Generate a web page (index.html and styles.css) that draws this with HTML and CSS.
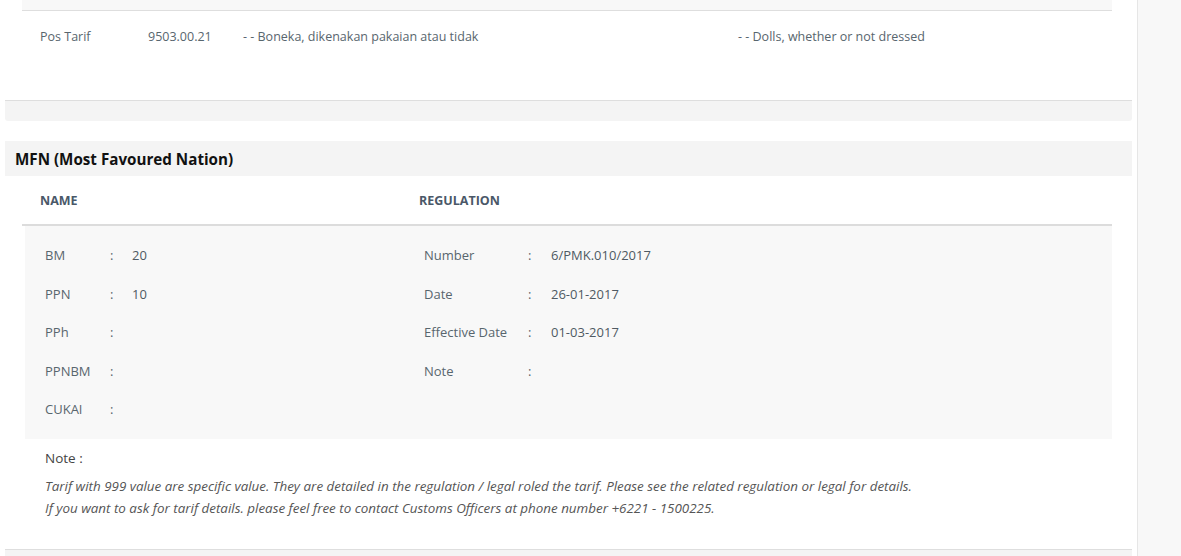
FILE: index.html
```html
<!DOCTYPE html>
<html lang="en">
<head>
  <meta charset="UTF-8">
  <meta name="viewport" content="width=device-width, initial-scale=1.0">
  <title>Tarif Detail</title>
  <link rel="stylesheet" href="styles.css">
</head>
<body>
  <div class="layout">
    <main class="content">

      <!-- tariff position panel -->
      <section class="panel">
        <div class="panel-body">
          <div class="top-strip"></div>
          <div class="tarif-row">
            <span class="tarif-label">Pos Tarif</span>
            <span class="tarif-code">9503.00.21</span>
            <span class="tarif-desc">- - Boneka, dikenakan pakaian atau tidak</span>
            <span class="tarif-desc">- - Dolls, whether or not dressed</span>
          </div>
        </div>
        <div class="panel-footer"></div>
      </section>

      <!-- MFN panel -->
      <section class="panel mfn">
        <h2 class="panel-heading">MFN (Most Favoured Nation)</h2>
        <div class="table">
          <div class="table-head">
            <div class="th">NAME</div>
            <div class="th">REGULATION</div>
          </div>
          <div class="table-body">
            <div class="col">
              <div class="field"><span class="key">BM</span><span class="sep">:</span><span class="val">20</span></div>
              <div class="field"><span class="key">PPN</span><span class="sep">:</span><span class="val">10</span></div>
              <div class="field"><span class="key">PPh</span><span class="sep">:</span><span class="val"></span></div>
              <div class="field"><span class="key">PPNBM</span><span class="sep">:</span><span class="val"></span></div>
              <div class="field"><span class="key">CUKAI</span><span class="sep">:</span><span class="val"></span></div>
            </div>
            <div class="col col-reg">
              <div class="field"><span class="key">Number</span><span class="sep">:</span><span class="val">6/PMK.010/2017</span></div>
              <div class="field"><span class="key">Date</span><span class="sep">:</span><span class="val">26-01-2017</span></div>
              <div class="field"><span class="key">Effective Date</span><span class="sep">:</span><span class="val">01-03-2017</span></div>
              <div class="field"><span class="key">Note</span><span class="sep">:</span><span class="val"></span></div>
            </div>
          </div>
        </div>
        <div class="note">
          <p class="note-title">Note :</p>
          <p class="note-text">Tarif with 999 value are specific value. They are detailed in the regulation / legal roled the tarif. Please see the related regulation or legal for details.</p>
          <p class="note-text">If you want to ask for tarif details. please feel free to contact Customs Officers at phone number +6221 - 1500225.</p>
        </div>
        <div class="panel-footer"></div>
      </section>

    </main>
    <aside class="side"></aside>
  </div>
</body>
</html>
```

FILE: styles.css
```css
html, body {
  margin: 0;
  height: 100%;
}
body {
  font-family: "Open Sans", "Noto Sans", sans-serif;
  font-size: 12.5px;
  color: #58666e;
  background: #fff;
  overflow: hidden;
}
.layout {
  display: flex;
  height: 556px;
}
.content {
  width: 1138px;
  padding: 0 5px;
  box-sizing: border-box;
  border-right: 1px solid #e6e6e6;
}
.side {
  flex: 1;
  background: #f8f8f8;
}
.panel-body {
  padding: 0 20px 0 17px;
}
.top-strip {
  height: 10px;
  background: #f8f8f8;
  border-bottom: 1px solid #dedede;
}
.tarif-row {
  display: grid;
  grid-template-columns: 108px 95px 495px 1fr;
  padding: 18px 0 0 18px;
  height: 71px;
  line-height: 16px;
}
.panel-footer {
  height: 20px;
  background: #f4f4f4;
  border-top: 1px solid #dedede;
  border-radius: 0 0 3px 3px;
}
.mfn {
  margin-top: 20px;
}
.panel-heading {
  margin: 0;
  height: 35px;
  line-height: 36px;
  padding-left: 10px;
  background: #f4f4f4;
  font-size: 15.2px;
  font-weight: 700;
  color: #111;
}
.table {
  margin: 0 20px 0 17px;
}
.table-head {
  display: grid;
  grid-template-columns: 379px 1fr;
  height: 48px;
  border-bottom: 2px solid #dcdcdc;
}
.th {
  padding-left: 18px;
  line-height: 50px;
  font-size: 12.5px;
  font-weight: 700;
  color: #4a5868;
}
.table-body {
  display: grid;
  grid-template-columns: 379px 1fr;
  margin-left: 3px;
  padding: 11px 0 9px;
  background: #f8f8f8;
}
.col {
  padding-left: 20px;
}
.field {
  display: grid;
  grid-template-columns: 65px 22px 1fr;
  height: 38.5px;
  line-height: 37px;
  font-size: 13px;
}
.col-reg .field {
  grid-template-columns: 104px 23px 1fr;
}
.val {
  color: #4f5a63;
}
.note {
  padding: 10px 0 30px 40px;
}
.note-title {
  margin: 0 0 8px;
  font-size: 13.5px;
  line-height: 18px;
  color: #444;
}
.note-text {
  margin: 0;
  font-style: italic;
  font-size: 13.4px;
  line-height: 22px;
  color: #555;
}
```
